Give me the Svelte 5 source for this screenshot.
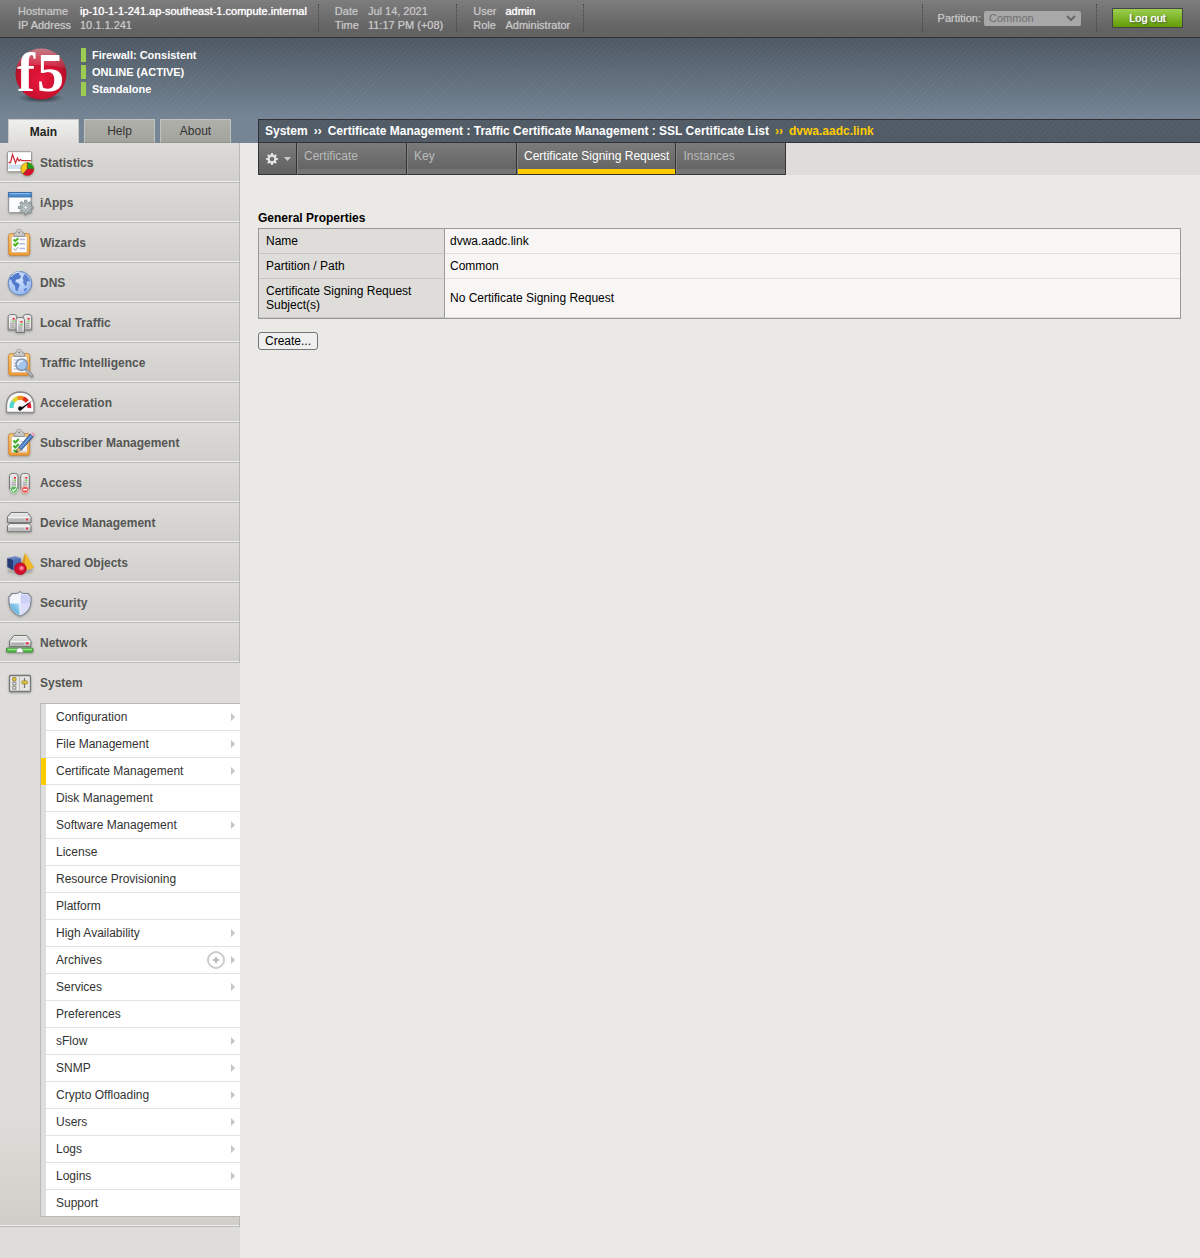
<script>
  const modules = [
    ['stats', 'Statistics'],
    ['iapps', 'iApps'],
    ['wizards', 'Wizards'],
    ['dns', 'DNS'],
    ['local', 'Local Traffic'],
    ['intel', 'Traffic Intelligence'],
    ['accel', 'Acceleration'],
    ['subscriber', 'Subscriber Management'],
    ['access', 'Access'],
    ['device', 'Device Management'],
    ['shared', 'Shared Objects'],
    ['security', 'Security'],
    ['network', 'Network']
  ];

  const systemMenu = [
    { label: 'Configuration', more: true },
    { label: 'File Management', more: true },
    { label: 'Certificate Management', more: true, active: true },
    { label: 'Disk Management' },
    { label: 'Software Management', more: true },
    { label: 'License' },
    { label: 'Resource Provisioning' },
    { label: 'Platform' },
    { label: 'High Availability', more: true },
    { label: 'Archives', more: true, add: true },
    { label: 'Services', more: true },
    { label: 'Preferences' },
    { label: 'sFlow', more: true },
    { label: 'SNMP', more: true },
    { label: 'Crypto Offloading', more: true },
    { label: 'Users', more: true },
    { label: 'Logs', more: true },
    { label: 'Logins', more: true },
    { label: 'Support' }
  ];

  const tabs = ['Certificate', 'Key', 'Certificate Signing Request', 'Instances'];
  const activeTab = 'Certificate Signing Request';
  const teeth = [0, 45, 90, 135, 180, 225, 270, 315];
</script>

{#snippet clipboard()}
  <rect x="4.7" y="6.7" width="21" height="21.6" rx="2" fill="url(#orange)" stroke="#c98a3c" />
  <rect x="7.5" y="9.5" width="15.5" height="16" fill="#fbfcff" stroke="#c9b48c" stroke-width=".6" />
  <path d="M10 9.5V7q0-1 2-1.2l1.2-2.6q2-1.8 4 0L18.500 5.800q2 .2 2 1.200v2.500z" fill="url(#metal)" stroke="#8b8b8b" stroke-width=".8" />
  <circle cx="15.200" cy="5.300" r="1" fill="#777" />
{/snippet}

{#snippet tower(x, y, h)}
  <g transform="translate({x} {y})">
    <path d="M.5 2.500Q1.200.5 3 .5h3.500Q8.500.5 9 2.500V{h}H.5z" fill="url(#metal)" stroke="#777" />
    <path d="M2 4v{h - 6}M7.500 4v{h - 6}" stroke="#fff" stroke-width=".8" />
    <path d="M2.500 {h - 6.5}h4.500M2.500 {h - 4.5}h4.500M2.500 {h - 2.5}h4.500" stroke="#aaa" stroke-width=".8" />
    <rect x="5" y="4" width="2" height="1.600" fill="#f11c2e" />
    <rect x="5" y="6.600" width="2" height="1.400" fill="#5fdc3c" />
  </g>
{/snippet}

{#snippet gear(cx, cy, scale, fill, edge)}
  <g transform="translate({cx} {cy}) scale({scale})" {fill} stroke={edge} stroke-width=".6">
    {#each teeth as angle}
      <path d="M-1.500-4.500L-1-7H1L1.500-4.500z" transform="rotate({angle})" />
    {/each}
    <circle r="3.900" fill="none" stroke={fill} stroke-width="2.600" />
  </g>
{/snippet}

{#snippet icon(name)}
  <svg class="icon" viewBox="0 0 32 32" aria-hidden="true">
    {#if name === 'stats'}
      <rect x="3.500" y="4.700" width="24" height="20" rx="1" fill="#fff" stroke="#9a9a9a" />
      <rect x="4.500" y="17.500" width="22" height="4.500" fill="#cfe1ee" />
      <path d="M4.500 15.500h2L8.500 7.500l3 8.500 2-5 1.500 3 1.500-1.500 1.500 1.200h9" fill="none" stroke="#cf3340" stroke-width="1.300" />
      <circle cx="23.300" cy="22" r="6.500" fill="#f6c91f" stroke="#7b6415" stroke-width=".6" />
      <path d="M23.300 22V15.500A6.500 6.500 0 0 1 29.800 22z" fill="#1fa01d" />
      <path d="M23.300 22H29.800A6.500 6.500 0 0 1 19 26.900z" fill="#d6102c" />
      <path d="M23.300 15.500V22H29.800M23.300 22L19 26.900" fill="none" stroke="#733" stroke-width=".7" />
    {:else if name === 'iapps'}
      <rect x="4.700" y="5.700" width="22.500" height="20" rx="1" fill="#fbfcfe" stroke="#8b8f96" />
      <rect x="4.700" y="5.500" width="22.500" height="4.500" fill="#4e8fd3" stroke="#2b5f9c" stroke-width=".8" />
      <path d="M5.500 6.500h21" stroke="#8ebcf0" />
      {@render gear(21.7, 20.5, 1.05, '#a8b2b3', '#6a7778')}
      <circle cx="21.700" cy="20.500" r="2" fill="#eef1f1" stroke="#6a7778" stroke-width=".8" />
    {:else if name === 'wizards'}
      {@render clipboard()}
      <path d="M9.500 12.500l1.800 1.700 3-3M9.500 16.800l1.800 1.700 3-3" fill="none" stroke="#48b81c" stroke-width="2" />
      <path d="M9.500 21.500l1.800 1.700 3-3" fill="none" stroke="#bcc" stroke-width="1.500" />
      <path d="M15.500 12.500H21M15.500 16.800H21M15.500 21.500H21" stroke="#b9b7dc" stroke-width="1.600" />
    {:else if name === 'dns'}
      <circle cx="16" cy="16.300" r="11.800" fill="url(#globe)" stroke="#6285bd" />
      <path d="M9 8Q12 5.500 16 5.500l-1 2.500 2.500 1-2 3-3 .5-1.500 2 3 1.500 2 2-1.500 3-1 3.500-2-1.500-.5-4-2.500-2.500-1-3-2-1.500q.5-3 1.500-4.500z" fill="#5379cc" />
      <path d="M20.500 7l2 1 2.500 3.500 1 3-2-.5-1.500 1 .5 2-1 2-1.500-1-1.500-2.500.5-2.500-1-1.500 1-2.500zM20 22l2-1 1.500 1-3 3z" fill="#5a80cf" />
      <path d="M7 10q3-5 9-5" fill="none" stroke="#e4eeff" />
    {:else if name === 'local'}
      {@render tower(3.7, 7, 16)}
      {@render tower(18.7, 7, 16)}
      {@render tower(11.5, 10, 15.5)}
    {:else if name === 'intel'}
      {@render clipboard()}
      <path d="M9.500 13h5M9.500 16h3M9.500 19h3M9.500 22h5" stroke="#a9aed0" />
      <path d="M22.500 23l5.500 6" stroke="#858b91" stroke-width="3" stroke-linecap="round" />
      <path d="M22.500 23l5 5.500" stroke="#bcc4ca" stroke-width="1.200" />
      <circle cx="17.700" cy="17.700" r="5.700" fill="#a5c5ed" stroke="#8495ae" stroke-width="1.600" />
      <path d="M14 18q0-4 4.500-4.200" fill="none" stroke="#ecf5ff" stroke-width="1.700" />
    {:else if name === 'accel'}
      <path d="M2.500 24.500V18Q3.500 5.500 16.300 5 29 5.500 30 18v6.500q0 1-1 1H3.500q-1 0-1-1z" fill="#fafafa" stroke="#8b8b8b" stroke-width="1.300" />
      <path d="M7.500 21q-.2-4 2-6.700" fill="none" stroke="#4fd6cc" stroke-width="4" />
      <path d="M9.300 14.500q1.700-2.300 4.500-3.300" fill="none" stroke="#ddd62e" stroke-width="4" />
      <path d="M13.500 11.300q3-1 6 .2" fill="none" stroke="#f58a1f" stroke-width="4" />
      <path d="M19.200 11.300q2.500 1 4 3.200" fill="none" stroke="#e22b1a" stroke-width="4" />
      <path d="M24.500 16.500q1 2 .8 4.500" fill="none" stroke="#e0182d" stroke-width="4" />
      <path d="M15 22L29 13 18 22.500q-2 2-3.500.5z" fill="#111" />
      <circle cx="16.200" cy="21.300" r="2.100" fill="#111" />
    {:else if name === 'subscriber'}
      {@render clipboard()}
      <path d="M9.500 13.500l1.800 2 3.500-3.500M9.500 18.500l1.800 2 3.500-3.500M9.500 23l1.800 1.500 2.500-2" fill="none" stroke="#38ad22" stroke-width="1.900" />
      <path d="M16 14.500h5M15 24h7" stroke="#c3c8de" stroke-width="1.200" />
      <path d="M26.500 7.500l2.500-1.700 1.500 1.500-1.700 2.700z" fill="#f5a9bd" stroke="#e79ab0" />
      <path d="M14.500 20.500L26 7.200l3 2.600L17.500 23z" fill="#497ec2" stroke="#264d87" stroke-width=".8" />
      <path d="M16.500 21L27.500 8.500" stroke="#8ab4e6" />
      <path d="M14.300 20.500l-2.100 5 5.300-2.500z" fill="#e8c390" stroke="#745b36" stroke-width=".6" />
      <path d="M12.800 24l-.7 1.700 1.800-.8z" fill="#222" />
    {:else if name === 'access'}
      {@render tower(5, 6, 16)}
      {@render tower(16.3, 6, 16)}
      <circle cx="10" cy="22.700" r="3.500" fill="#58b55a" stroke="#d2ebd0" stroke-width=".8" />
      <path d="M8.300 22.700l1.300 1.400 2.200-2.500" fill="none" stroke="#fff" stroke-width="1.100" />
      <circle cx="21" cy="22.700" r="3.500" fill="#e95a52" stroke="#f6cbc7" stroke-width=".8" />
      <path d="M19 22.700h4" stroke="#fff" stroke-width="1.300" />
    {:else if name === 'device'}
      <path d="M3.500 10L7 5.500h16.500L27 10v5.500H3.500z" fill="url(#metal)" stroke="#777" />
      <path d="M3.500 19l2-2.500h19.500l2 2.500v5.700H3.500z" fill="url(#metal)" stroke="#777" />
      <path d="M4 10.200h22.500M4 19.200h22.500" stroke="#fff" />
      <path d="M5.500 13h14M5.500 22h14" stroke="#aaa" />
      <path d="M22 12.500h2M22 21.500h2" stroke="#f12b3d" stroke-width="2" />
    {:else if name === 'shared'}
      <ellipse cx="16" cy="24" rx="13" ry="3" fill="#999" opacity=".4" />
      <path d="M3.300 11l5.700 1.500V23L3.300 20z" fill="#263a75" />
      <path d="M9 12.500l8-1.500v10.500L9 23z" fill="#4a6db3" />
      <path d="M3.300 11l8-1.700 5.700 1.700-8 1.500z" fill="#6484c4" />
      <path d="M21.300 6L30 20.500q-5 3.500-14 1.500z" fill="#f1b927" />
      <path d="M21.300 6l-.8 16.500-4.500-.5z" fill="#d6942e" />
      <circle cx="16.300" cy="21.700" r="6" fill="#d20f2f" stroke="#a60b25" stroke-width=".6" />
      <circle cx="17.500" cy="21.300" r="2.500" fill="#f15d77" />
      <circle cx="17.700" cy="21.100" r="1" fill="#ffb1bf" />
    {:else if name === 'security'}
      <path d="M16 4.500Q18 7 22 6.500q2-.2 3 1Q25 9 27 9.500q.5 8-2 12.500-2.500 4.500-9 7-6.500-2.500-9-7-2.500-4.500-2-12.500Q7 9 7 7.500q1-1.200 3-1Q14 7 16 4.500z" fill="#f3f5fd" stroke="#7e8796" stroke-width="1.200" />
      <path d="M6 16.500h10v11.700q-5.500-2.200-8-6.400Q6.300 19 6 16.500z" fill="url(#shieldblue)" />
      <path d="M16 16.500h10q-.3 2.500-2 5.300-2.500 4.200-8 6.400z" fill="#dddcfa" />
      <path d="M16 6.500Q18.500 8.300 22 7.700q1.500 0 2 .7.500 1.500 2 2v6H16z" fill="#cdd0f6" />
      <path d="M16 6.500V28" stroke="#fff" stroke-width=".8" />
    {:else if name === 'network'}
      <path d="M5.500 14L10 8.500h12.500L27 14v5.500H5.500z" fill="url(#metal)" stroke="#777" />
      <path d="M6.500 14.300h20" stroke="#fff" />
      <path d="M8 17h12" stroke="#999" />
      <path d="M22 16.300h2.500" stroke="#f12b3d" stroke-width="2" />
      <rect x="2.500" y="21" width="26.500" height="4.200" rx="1" fill="#53c247" stroke="#4b8a43" />
      <path d="M4 22.300h24" stroke="#a9eb9e" />
      <path d="M12.500 25.500v-2.500l2-2h2.500l2 2v2.500z" fill="#f8f8f8" stroke="#999" stroke-width=".8" />
    {:else}
      <rect x="5.500" y="8.500" width="21" height="16" rx="1" fill="#e6e6e3" stroke="#777" stroke-width="1.300" />
      <path d="M15.500 9.500v14" stroke="#bbb" />
      <rect x="8" y="10" width="4.500" height="13" fill="#c9c9c5" />
      <circle cx="10.300" cy="12.200" r="1.800" fill="#e8c928" stroke="#85752b" stroke-width=".7" />
      <circle cx="10.300" cy="16.600" r="1.600" fill="#ddd" stroke="#777" stroke-width=".8" />
      <circle cx="10.300" cy="20.800" r="1.600" fill="#ddd" stroke="#777" stroke-width=".8" />
      <path d="M20.500 11v10" stroke="#777" stroke-width="1.300" />
      <rect x="18" y="14" width="5.200" height="2.800" fill="#f0cf2f" stroke="#8d792b" stroke-width=".7" />
    {/if}
  </svg>
{/snippet}

<svg class="defs" width="0" height="0" aria-hidden="true">
  <defs>
    <linearGradient id="orange" x1="0" y1="0" x2="0" y2="1"><stop offset="0" stop-color="#fbc878" /><stop offset="1" stop-color="#f59a31" /></linearGradient>
    <linearGradient id="metal" x1="0" y1="0" x2="0" y2="1"><stop offset="0" stop-color="#ededed" /><stop offset="1" stop-color="#b8b8b8" /></linearGradient>
    <radialGradient id="globe" cx=".4" cy=".3" r=".8"><stop offset="0" stop-color="#d7e6ff" /><stop offset="1" stop-color="#8eb1ea" /></radialGradient>
    <linearGradient id="shieldblue" x1="1" y1="0" x2="0" y2="1"><stop offset="0" stop-color="#b6e3f7" /><stop offset="1" stop-color="#2f95d2" /></linearGradient>
    <radialGradient id="ball" cx=".5" cy=".6" r=".6"><stop offset="0" stop-color="#e8173c" /><stop offset=".7" stop-color="#c8102e" /><stop offset="1" stop-color="#8e1523" /></radialGradient>
    <linearGradient id="gloss" x1="0" y1="0" x2="0" y2="1"><stop offset="0" stop-color="#fff" stop-opacity=".45" /><stop offset="1" stop-color="#fff" stop-opacity=".05" /></linearGradient>
    <radialGradient id="shade"><stop offset="0" stop-color="#1c232b" stop-opacity=".9" /><stop offset="1" stop-color="#1c232b" stop-opacity="0" /></radialGradient>
  </defs>
</svg>

<div class="page">
  <header class="topbar">
    <dl class="host"><dt>Hostname</dt><dd class="strong">ip-10-1-1-241.ap-southeast-1.compute.internal</dd><dt>IP Address</dt><dd>10.1.1.241</dd></dl>
    <dl><dt>Date</dt><dd>Jul 14, 2021</dd><dt>Time</dt><dd>11:17 PM (+08)</dd></dl>
    <dl><dt>User</dt><dd class="strong">admin</dd><dt>Role</dt><dd>Administrator</dd></dl>
    <div class="partition">
      <label for="partition">Partition:</label>
      <span class="picker">
        <select id="partition" disabled><option>Common</option></select>
        <svg viewBox="0 0 10 6" width="10" height="6" aria-hidden="true"><path d="M1 1l4 4 4-4" fill="none" stroke="#666" stroke-width="2" /></svg>
      </span>
    </div>
    <button class="logout">Log out</button>
  </header>

  <div class="banner">
    <div class="identity">
      <div class="device">
        <svg class="logo" viewBox="0 0 56 56" role="img" aria-label="f5">
          <ellipse cx="27" cy="51" rx="23" ry="5" fill="url(#shade)" />
          <circle cx="27" cy="27" r="25.500" fill="url(#ball)" />
          <path d="M27 1.500A25.500 25.500 0 0 0 2 22Q27 14 52 22A25.500 25.500 0 0 0 27 1.500z" fill="url(#gloss)" />
          <text x="3" y="44" font-size="54">f</text>
          <text x="23" y="44" font-size="54">5</text>
        </svg>
        <ul class="status">
          <li>Firewall: Consistent</li>
          <li>ONLINE (ACTIVE)</li>
          <li>Standalone</li>
        </ul>
      </div>
      <nav class="panes" aria-label="Panels">
        <button class="on">Main</button>
        <button>Help</button>
        <button>About</button>
      </nav>
    </div>
    <nav class="crumbs" aria-label="Breadcrumb">
      <span>System</span><i>››</i><span>Certificate Management : Traffic Certificate Management : SSL Certificate List</span><i class="here">››</i><span class="here">dvwa.aadc.link</span>
    </nav>
  </div>

  <div class="body">
    <nav class="sidebar" aria-label="Main">
      <ul>
        {#each modules as [key, label]}
          <li class="module"><a href="#{key}">{@render icon(key)}{label}</a></li>
        {/each}
        <li class="module open">
          <a href="#system">{@render icon('system')}System</a>
          <ul class="submenu">
            {#each systemMenu as item}
              <li class:active={item.active}>
                <a href="#menu">{item.label}</a>
                {#if item.add}
                  <button class="add" aria-label="Create archive">
                    <svg viewBox="0 0 18 18" width="18" height="18"><circle cx="9" cy="9" r="8" fill="none" stroke="#ccc" stroke-width="2" /><path d="M9 6v6M6 9h6" stroke="#bbb" stroke-width="2" /></svg>
                  </button>
                {/if}
                {#if item.more}
                  <svg viewBox="0 0 4 8" width="4" height="8" aria-hidden="true"><path d="M0 0l4 4-4 4z" fill="#c4c4c4" /></svg>
                {/if}
              </li>
            {/each}
          </ul>
        </li>
      </ul>
    </nav>

    <main>
      <div class="tabstrip">
        <button class="gear" aria-label="Preferences">
          <svg viewBox="0 0 14 14" width="14" height="14">{@render gear(7, 7, 0.85, '#e2e2e2', 'none')}</svg>
          <svg viewBox="0 0 7 4" width="7" height="4"><path d="M0 0h7L3.500 4z" fill="#ccc" /></svg>
        </button>
        {#each tabs as tab}
          <a href="#tab" class="tab" class:current={tab === activeTab}>{tab}</a>
        {/each}
      </div>

      <section>
        <h2>General Properties</h2>
        <table>
          <tbody>
            <tr><th scope="row">Name</th><td>dvwa.aadc.link</td></tr>
            <tr><th scope="row">Partition / Path</th><td>Common</td></tr>
            <tr><th scope="row">Certificate Signing Request Subject(s)</th><td>No Certificate Signing Request</td></tr>
          </tbody>
        </table>
        <button class="create">Create...</button>
      </section>
    </main>
  </div>
</div>

<style>
  :global(body) {
    margin: 0;
    background: #eae9e5;
    font-family: "Liberation Sans", Arial, sans-serif;
    font-size: 12px;
    line-height: 14px;
    color: #000;
  }
  :global(*) { box-sizing: border-box; }
  .defs { position: absolute; }
  ul, dl, dd { margin: 0; padding: 0; list-style: none; }
  a { color: inherit; text-decoration: none; }
  button, select { font: inherit; margin: 0; padding: 0; }
  .page { min-height: 100vh; display: flex; flex-direction: column; }

  .topbar {
    display: flex;
    align-items: flex-start;
    height: 38px;
    padding: 4px 17px 0 2px;
    background: linear-gradient(#7d7d7d, #636363 80%);
    border-bottom: 1px solid #303237;
    color: #c8c8c8;
    font-size: 11px;
    text-shadow: 0 0 1px #aaa;
  }
  dl {
    display: grid;
    grid-template-columns: auto auto;
    column-gap: 9px;
    padding: 0 13px 0 16px;
    height: 28px;
    border-right: 1px dotted #444;
  }
  .host { padding-right: 11px; }
  dd.strong { color: #fff; text-shadow: 0 0 1px #fff; }
  .partition {
    display: flex;
    align-items: center;
    gap: 3px;
    height: 28px;
    margin-left: auto;
    padding: 0 15px;
    border: dotted #444;
    border-width: 0 1px;
  }
  .picker { display: grid; align-items: center; width: 97px; }
  .picker > * { grid-area: 1 / 1; }
  .picker svg { justify-self: end; margin-right: 5px; }
  select {
    appearance: none;
    width: 100%;
    height: 15px;
    padding: 0 5px;
    background: #a8a8a8;
    border: 0;
    border-radius: 2px;
    color: #6f6f6f;
    line-height: 14px;
    opacity: 1;
  }
  .logout {
    width: 71px;
    height: 20px;
    margin: 4px 0 0 15px;
    border: 1px solid #444;
    background: linear-gradient(#9cce4f, #629c07);
    color: #fff;
    text-shadow: 0 0 1px #fff, 1px 1px 2px #333;
  }

  .banner {
    display: flex;
    align-items: flex-end;
    gap: 18px;
    background:
      repeating-linear-gradient(135deg, rgba(255, 255, 255, 0.03) 0 1px, transparent 1px 4px),
      linear-gradient(#4d5863, #748494 75%);
  }
  .identity { flex: none; width: 240px; }
  .device { display: flex; gap: 11px; padding: 9px 0 0 14px; height: 81px; }
  .logo { width: 56px; height: 56px; overflow: visible; }
  .logo text { font-family: "Liberation Serif", serif; font-weight: bold; fill: #fff; }
  .status { display: grid; gap: 3px; align-content: start; padding-top: 1px; color: #fff; font-size: 11px; font-weight: bold; }
  .status li { padding-left: 6px; border-left: 5px solid #9ccc52; }
  .panes { display: flex; gap: 5px; padding-left: 8px; }
  .panes button {
    width: 71px;
    height: 24px;
    background: linear-gradient(#b0b0aa, #a3a39d);
    border: solid #c1c1bd;
    border-width: 1px 1px 0 1px;
    border-bottom: 1px solid #92928e;
    color: #333;
  }
  .panes .on { background: linear-gradient(#f0f0ee, #deddd9); border-color: #c8c8c6; border-bottom: 0; font-weight: bold; color: #222; }
  .crumbs {
    flex: 1;
    display: flex;
    height: 24px;
    padding: 4px 6px;
    background:
      repeating-linear-gradient(135deg, rgba(255, 255, 255, 0.03) 0 1px, transparent 1px 4px),
      #505b66;
    border: solid #2f3236;
    border-width: 1px 0 1px 1px;
    color: #fff;
    font-weight: bold;
  }
  .crumbs i { font-style: normal; margin: 0 6px; }
  .crumbs .here { color: #fc0; }

  .body { flex: 1; display: flex; }
  .sidebar { flex: none; width: 240px; background: #deddd9; color: #555; font-weight: bold; }
  .module {
    background: linear-gradient(#dcdbd8, #d0cfcb);
    border: solid #b9b9b9;
    border-width: 0 1px 1px 0;
    box-shadow: inset 0 -1px #f1f1ee;
  }
  .module > a { display: flex; align-items: center; gap: 4px; height: 39px; padding-left: 4px; }
  .icon { width: 32px; height: 32px; filter: drop-shadow(0 1px 1px rgba(0, 0, 0, 0.25)); }
  .open { border-right: 0; background: linear-gradient(#deddd9 80%, #cfcec9); }
  .open::after { content: ""; display: block; height: 9px; border-right: 1px solid #b9b9b9; }
  .open > a { height: 40px; }
  .submenu {
    margin-left: 40px;
    border: solid #b9b9b9;
    border-width: 1px 0 1px 1px;
    background: #fff;
    color: #333;
    font-weight: normal;
  }
  .submenu li {
    display: flex;
    align-items: center;
    height: 27px;
    padding: 0 5px 2px 0;
    gap: 6px;
    border-left: 5px solid #dedede;
    box-shadow: inset 0 -1px #e2e2e2;
  }
  .submenu li:last-child { height: 26px; padding-bottom: 0; box-shadow: none; }
  .submenu li.active { border-left-color: #fc0; }
  .submenu a { flex: 1; padding-left: 10px; }
  .add { width: 18px; height: 18px; border: 0; background: none; line-height: 0; }

  main { flex: 1; min-width: 0; padding: 0 0 24px 18px; }
  .tabstrip { display: flex; height: 32px; background: #deddd9; border-left: 1px solid #333; }
  .gear, .tab {
    background: linear-gradient(#7b7b7b, #636363 90%);
    border: solid #333;
    border-width: 0 1px 1px 0;
  }
  .gear { display: flex; align-items: center; gap: 5px; width: 38px; padding-left: 6px; }
  .tab {
    min-width: 110px;
    padding: 6px 6px 0 6px;
    border-left: 1px solid #858585;
    box-shadow: inset 0 -5px #757575;
    color: #bbb;
  }
  .current { color: #fff; box-shadow: inset 0 -5px #fc0; }

  section { padding: 36px 19px 0 0; }
  h2 { margin: 0 0 3px; font-size: 12px; line-height: 14px; }
  table { width: 100%; border-collapse: separate; border-spacing: 0; border: 1px solid #999; }
  th, td { padding: 5px; text-align: left; border-bottom: 1px solid #c6c6c3; line-height: 14px; }
  th { width: 186px; padding-left: 7px; background: #deddd9; border-right: 1px solid #999; font-weight: normal; }
  td { background: #f7f6f4; border-bottom-color: #dededb; }
  .create { display: block; width: 60px; height: 18px; margin-top: 13px; background: #efefef; border: 1px solid #767676; border-radius: 3px; color: #000; }
</style>
